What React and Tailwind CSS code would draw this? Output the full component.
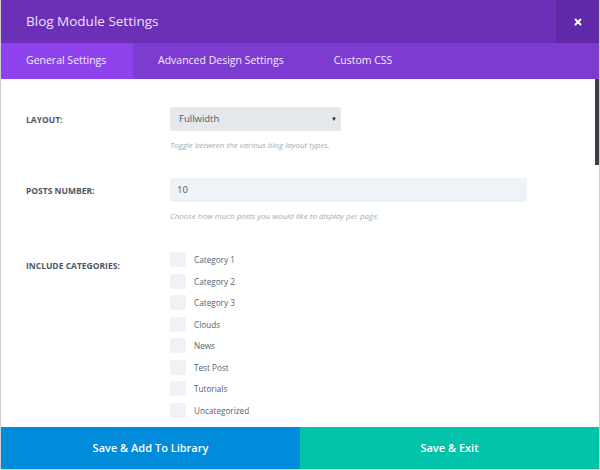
import { X } from 'lucide-react'

const categories = [
  'Category 1',
  'Category 2',
  'Category 3',
  'Clouds',
  'News',
  'Test Post',
  'Tutorials',
  'Uncategorized',
]

function Label({ children, className = '' }) {
  return (
    <div className={`w-[169px] shrink-0 pl-[25px] text-[8.5px] font-bold uppercase text-[#4c5866] ${className}`}>
      {children}
    </div>
  )
}

function Hint({ children }) {
  return <p className="mt-[8px] text-[8px] italic text-[#a2abb5]">{children}</p>
}

export default function App() {
  return (
    <div
      className="flex h-[470px] w-[600px] flex-col overflow-hidden border-x border-b border-[#cfcfcf] bg-white"
      style={{ fontFamily: '"Open Sans", "Liberation Sans", sans-serif' }}
    >
      {/* header */}
      <div className="flex h-[43px] shrink-0 items-center bg-[#6b2fb8]">
        <h1 className="flex-1 pl-[25px] text-[13.5px] text-[#ece3f8]">Blog Module Settings</h1>
        <button className="flex h-full w-[43px] items-center justify-center bg-[#5f29a8] text-white">
          <X size={10} strokeWidth={4.5} />
        </button>
      </div>

      {/* tabs */}
      <div className="flex h-[36px] shrink-0 items-center bg-[#7e3bd0] text-[10.5px] text-[#f3ecfc]">
        <div className="flex h-full w-[132px] items-center bg-[#8e42eb] pl-[25px]">General Settings</div>
        <div className="pl-[25px]">Advanced Design Settings</div>
        <div className="pl-[50px]">Custom CSS</div>
      </div>

      {/* content */}
      <div className="flex min-h-0 flex-1">
        <div className="flex-1 pt-[28px]">
          <div className="flex items-start">
            <Label className="mt-[7px]">Layout:</Label>
            <div>
              <div className="flex h-[24px] w-[171px] items-center justify-between rounded-[2px] bg-[#e5e8eb] pl-[9px] pr-[4px] text-[9.5px] text-[#4c5866]">
                <span>Fullwidth</span>
                <span className="text-[6px] text-[#222]">▼</span>
              </div>
              <Hint>Toggle between the various blog layout types.</Hint>
            </div>
          </div>

          <div className="mt-[27px] flex items-start">
            <Label className="mt-[7px]">Posts Number:</Label>
            <div>
              <div className="flex h-[24px] w-[357px] items-center rounded-[2px] bg-[#eff2f6] pl-[7px] text-[9.5px] text-[#4c5866]">
                10
              </div>
              <Hint>Choose how much posts you would like to display per page.</Hint>
            </div>
          </div>

          <div className="mt-[30px] flex items-start">
            <Label className="mt-[8px]">Include Categories:</Label>
            <div className="flex flex-col gap-[6.5px]">
              {categories.map((c) => (
                <div key={c} className="flex h-[15px] items-center">
                  <span className="h-[15px] w-[16px] rounded-[2px] bg-[#eff2f6]" />
                  <span className="ml-[8px] pt-[2px] text-[8.2px] text-[#56606b]">{c}</span>
                </div>
              ))}
            </div>
          </div>
        </div>

        {/* scrollbar */}
        <div className="w-[4px] shrink-0">
          <div className="h-[86px] w-[4px] bg-[#3a4148]" />
        </div>
      </div>

      {/* footer */}
      <div className="flex h-[42px] shrink-0 text-[11px] font-semibold text-white">
        <button className="flex w-[299px] items-center justify-center bg-[#008bdb]">Save &amp; Add To Library</button>
        <button className="flex flex-1 items-center justify-center bg-[#00c3aa]">Save &amp; Exit</button>
      </div>
    </div>
  )
}
